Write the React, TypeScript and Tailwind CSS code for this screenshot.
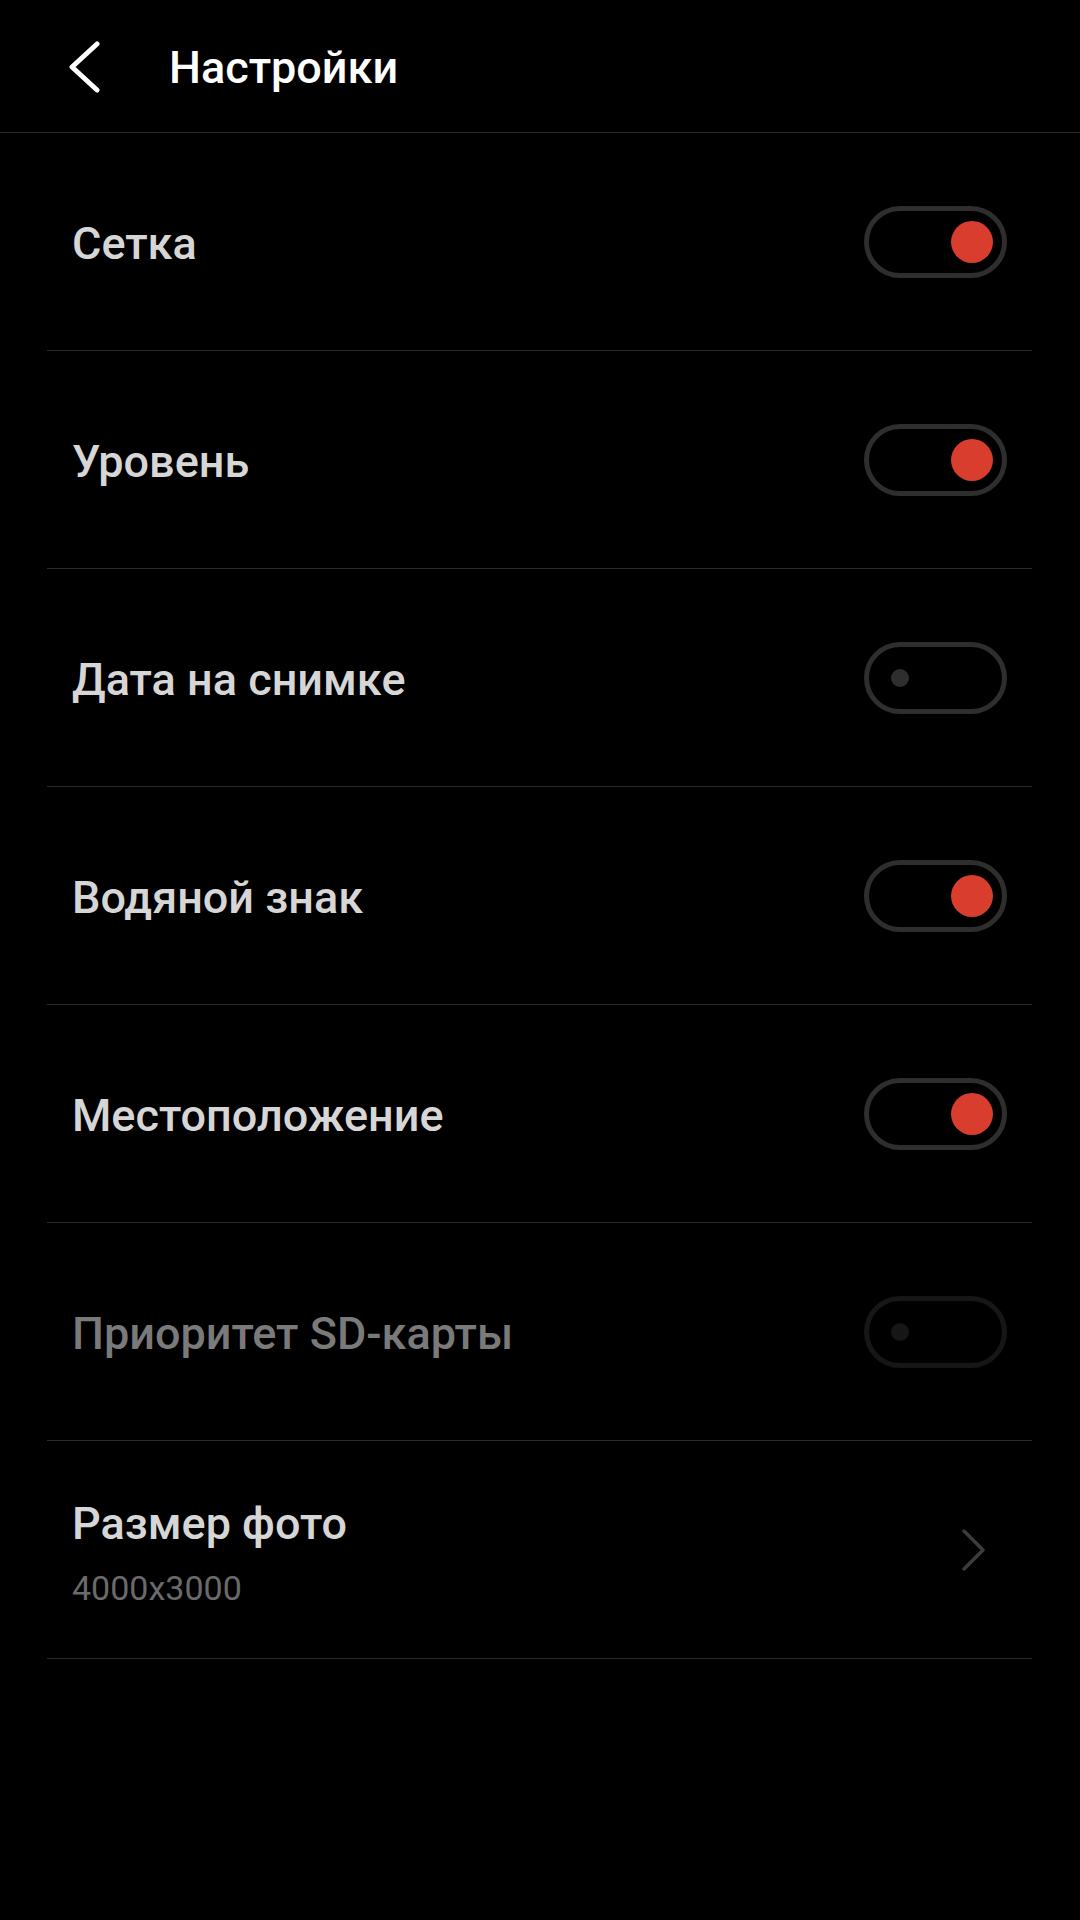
import React from 'react';

type Item = {
  title: string;
  on?: boolean;
  disabled?: boolean;
  subtitle?: string;
  link?: boolean;
};

const items: Item[] = [
  { title: 'Сетка', on: true },
  { title: 'Уровень', on: true },
  { title: 'Дата на снимке', on: false },
  { title: 'Водяной знак', on: true },
  { title: 'Местоположение', on: true },
  { title: 'Приоритет SD-карты', on: false, disabled: true },
  { title: 'Размер фото', subtitle: '4000x3000', link: true },
];

function Toggle({ on, disabled }: { on?: boolean; disabled?: boolean }) {
  if (disabled) {
    return (
      <div className="flex h-[72px] w-[143px] items-center rounded-full border-[5px] border-[#161616] pl-[22px]">
        <div className="h-[18px] w-[18px] rounded-full bg-[#161616]" />
      </div>
    );
  }
  if (on) {
    return (
      <div className="flex h-[72px] w-[143px] items-center justify-end rounded-full border-[5px] border-[#2e2e2e] pr-[9px]">
        <div className="h-[42px] w-[42px] rounded-full bg-[#d83d2d]" />
      </div>
    );
  }
  return (
    <div className="flex h-[72px] w-[143px] items-center rounded-full border-[5px] border-[#2e2e2e] pl-[22px]">
      <div className="h-[18px] w-[18px] rounded-full bg-[#2e2e2e]" />
    </div>
  );
}

export default function App() {
  return (
    <div
      className="min-h-[1920px] w-[1080px] bg-black"
      style={{ fontFamily: 'Roboto, "Noto Sans", sans-serif' }}
    >
      {/* Header */}
      <div className="flex h-[133px] items-center border-b border-[#2a2a2a] pt-[2px]">
        <div className="flex w-[169px] items-center pl-[68px]">
          <svg width="34" height="52" viewBox="0 0 34 52" fill="none">
            <path
              d="M29 3 L4 26 L29 49"
              stroke="#ffffff"
              strokeWidth="5"
              strokeLinecap="round"
              strokeLinejoin="round"
            />
          </svg>
        </div>
        <span className="text-[45px] font-medium leading-none text-white">Настройки</span>
      </div>

      {/* Settings list */}
      <div className="mx-[47px] w-[985px]">
        {items.map((item) => (
          <div
            key={item.title}
            className="flex h-[218px] items-center justify-between border-b border-[#2a2a2a] pl-[25px] pr-[25px]"
          >
            {item.subtitle ? (
              <div className="flex flex-col pt-[6px]">
                <span className="text-[45px] font-medium leading-none text-[#d6d6d6]">{item.title}</span>
                <span className="mt-[25px] text-[34px] leading-none text-[#6a6a6a]">{item.subtitle}</span>
              </div>
            ) : (
              <span
                className={
                  item.disabled
                    ? 'pt-[3px] text-[45px] font-medium leading-none text-[#7a7a7a]'
                    : 'pt-[3px] text-[45px] font-medium leading-none text-[#d6d6d6]'
                }
              >
                {item.title}
              </span>
            )}
            {item.link ? (
              <div className="pr-[20px]">
                <svg width="26" height="42" viewBox="0 0 26 42" fill="none">
                  <path d="M3 2 L22 21 L3 40" stroke="#3c3c3c" strokeWidth="3.5" strokeLinecap="round" strokeLinejoin="round" />
                </svg>
              </div>
            ) : (
              <Toggle on={item.on} disabled={item.disabled} />
            )}
          </div>
        ))}
      </div>
    </div>
  );
}
